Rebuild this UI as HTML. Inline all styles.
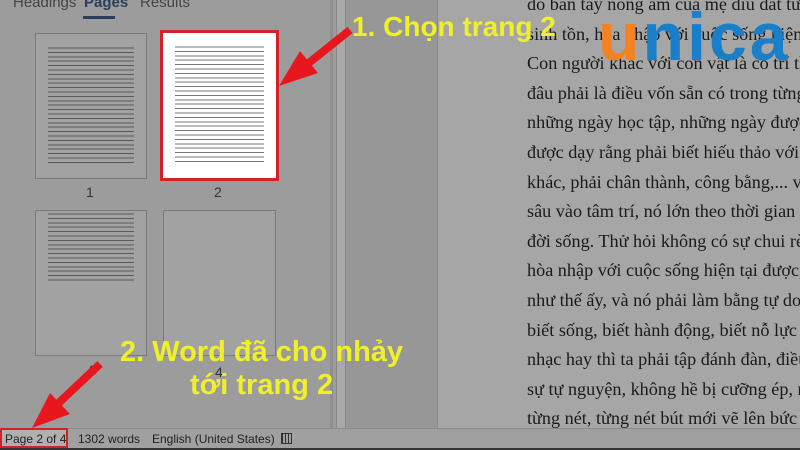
<!DOCTYPE html>
<html><head><meta charset="utf-8"><style>
*{margin:0;padding:0;box-sizing:border-box}
body{width:800px;height:450px;overflow:hidden;position:relative;background:#9c9c9c;font-family:"Liberation Sans",sans-serif}
.abs{position:absolute}
.tab{position:absolute;top:-6px;font-size:15px;color:#444}
.th{position:absolute;background:#a2a2a2;border:1px solid #7a7a7a}
.lines{position:absolute;left:12px;right:12px;top:12px;background:repeating-linear-gradient(#a2a2a2 0 1.5px,#5a5a5a 1.5px 2.5px,#a2a2a2 2.5px 4.4px)}
.lbl{position:absolute;font-size:14px;color:#333}
.docwrap{position:absolute;left:437px;top:0;width:363px;height:428px;overflow:hidden;background:#a6a6a6;border-left:1px solid #8a8a8a}
.doc{position:absolute;left:89px;top:-10px;font-family:"Liberation Serif",serif;font-size:18.2px;color:#1a1a1a;line-height:29.6px;white-space:nowrap}
.y{position:absolute;color:#f0f02a;font-weight:bold;font-size:28px;white-space:nowrap}
.sb{position:absolute;top:428px;left:0;width:800px;height:20px;background:#a0a0a0;border-top:1px solid #8a8a8a;font-size:12px;color:#222}
.sb span{position:absolute;top:3px}
</style></head><body>
<div class="tab" style="left:13px">Headings</div>
<div class="tab" style="left:84px;font-weight:bold;color:#2b3e5c">Pages</div>
<div class="tab" style="left:140px">Results</div>
<div class="abs" style="left:83px;top:16px;width:32px;height:3px;background:#2b3e5c"></div>

<div class="th" style="left:35px;top:33px;width:112px;height:146px"><div class="lines" style="height:120px"></div></div>
<div class="abs" style="left:160px;top:30px;width:119px;height:151px;background:#fff;border:3px solid #d42027"><div class="abs" style="left:12px;right:12px;top:12px;height:120px;background:repeating-linear-gradient(#fff 0 1.5px,#777 1.5px 2.5px,#fff 2.5px 4.4px)"></div></div>
<div class="lbl" style="left:86px;top:184px">1</div>
<div class="lbl" style="left:214px;top:184px">2</div>
<div class="th" style="left:35px;top:210px;width:112px;height:146px"><div class="lines" style="height:70px;top:1px"></div></div>
<div class="th" style="left:163px;top:210px;width:113px;height:146px"></div>
<div class="lbl" style="left:89px;top:362px">3</div>
<div class="lbl" style="left:215px;top:364px">4</div>

<div class="abs" style="left:330px;top:0;width:3px;height:428px;background:#8e8e8e"></div>
<div class="abs" style="left:336px;top:0;width:10px;height:428px;background:#a9a9a9;border-left:1px solid #888;border-right:1px solid #888"></div>
<div class="abs" style="left:346px;top:0;width:91px;height:428px;background:#979797"></div>
<div class="docwrap"><div class="doc">do bàn tay nóng ấm của mẹ dìu dắt từ<br>sinh tồn, hòa nhập với cuộc sống hiện tại<br>Con người khác với con vật là có trí thông<br>đâu phải là điều vốn sẵn có trong từng<br>những ngày học tập, những ngày được<br>được dạy rằng phải biết hiếu thảo với cha<br>khác, phải chân thành, công bằng,... và<br>sâu vào tâm trí, nó lớn theo thời gian khi<br>đời sống. Thử hỏi không có sự chui rèn<br>hòa nhập với cuộc sống hiện tại được,<br>như thế ấy, và nó phải làm bằng tự do<br>biết sống, biết hành động, biết nỗ lực<br>nhạc hay thì ta phải tập đánh đàn, điều<br>sự tự nguyện, không hề bị cưỡng ép, rà<br>từng nét, từng nét bút mới vẽ lên bức</div></div>

<div class="abs" style="left:598px;top:2px;font-size:68px;font-weight:bold;letter-spacing:3px;line-height:70px;white-space:nowrap"><span style="color:#f58220">u</span><span style="color:#1a7fc9">nica</span></div>

<div class="y" style="left:352px;top:11px">1. Chọn trang 2</div>
<div class="y" style="left:120px;top:336px;font-size:29px">2. Word đã cho nhảy</div>
<div class="y" style="left:190px;top:369px;font-size:29px">tới trang 2</div>

<svg class="abs" style="left:0;top:0" width="800" height="450">
<line x1="350" y1="30" x2="295" y2="74" stroke="#e8171d" stroke-width="8"/>
<polygon points="279,86 300,51 318,73" fill="#e8171d"/>
<line x1="100" y1="364" x2="48" y2="413" stroke="#e8171d" stroke-width="8"/>
<polygon points="32,428 50,393 70,414" fill="#e8171d"/>
</svg>

<div class="sb">
<div class="abs" style="left:0;top:-1px;width:68px;height:20px;border:2px solid #d42027;background:#b0b0b0"></div>
<span style="left:5px">Page 2 of 4</span>
<span style="left:78px">1302 words</span>
<span style="left:152px">English (United States)</span>
<span style="left:281px;width:11px;height:11px;top:4px;border:1px solid #333;background:repeating-linear-gradient(90deg,#333 0 1px,transparent 1px 3px)"></span>
</div>
<div class="abs" style="left:0;top:448px;width:800px;height:2px;background:#333"></div>
</body></html>
